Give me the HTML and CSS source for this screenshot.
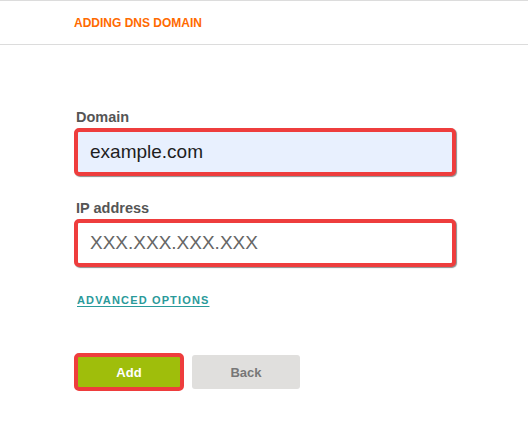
FILE: index.html
```html
<!DOCTYPE html>
<html>
<head>
<meta charset="utf-8">
<link rel="stylesheet" href="styles.css">
</head>
<body>
<div class="header">
  <h1 class="title">ADDING DNS DOMAIN</h1>
</div>
<form class="form">
  <label class="label" for="domain">Domain</label>
  <input class="field field-filled" id="domain" type="text" value="example.com">
  <label class="label label-second" for="ip">IP address</label>
  <input class="field" id="ip" type="text" placeholder="XXX.XXX.XXX.XXX">
  <a class="advanced" href="#">ADVANCED OPTIONS</a>
  <div class="actions">
    <button class="btn btn-add" type="button">Add</button>
    <button class="btn btn-back" type="button">Back</button>
  </div>
</form>
</body>
</html>
```
FILE: styles.css
```css
html, body {
  margin: 0;
  padding: 0;
  background: #ffffff;
  font-family: "Liberation Sans", Arial, sans-serif;
}
.header {
  height: 43px;
  border-top: 1px solid #dcdcdc;
  border-bottom: 1px solid #dcdcdc;
  padding-left: 74px;
  display: flex;
  align-items: flex-start;
}
.title {
  margin: 15px 0 0 0;
  font-size: 12px;
  line-height: 14px;
  font-weight: bold;
  color: #ff6a00;
}
.form {
  display: flex;
  flex-direction: column;
  align-items: flex-start;
  padding-left: 74px;
  margin: 0;
}
.label {
  font-size: 14.5px;
  line-height: 16px;
  font-weight: bold;
  color: #555555;
  margin: 64px 0 0 2px;
}
.label-second {
  margin-top: 24px;
}
.field {
  box-sizing: border-box;
  width: 382px;
  height: 48px;
  margin-top: 3px;
  border: 4px solid #ee3d3d;
  border-radius: 5px;
  box-shadow: 1px 1px 1px rgba(0, 0, 0, 0.45);
  padding: 0 0 0 12px;
  font-family: "Liberation Sans", Arial, sans-serif;
  font-size: 19px;
  color: #1e1e1e;
  background: #ffffff;
  outline: none;
}
.field-filled {
  background: #e8f0fe;
}
.field::placeholder {
  color: #666666;
  opacity: 1;
}
.advanced {
  margin: 26px 0 0 3px;
  font-size: 11px;
  line-height: 14px;
  font-weight: bold;
  letter-spacing: 1.15px;
  color: #2a9a9a;
  text-decoration: underline;
  text-underline-offset: 2px;
}
.actions {
  display: flex;
  align-items: center;
  gap: 8px;
  margin-top: 46px;
}
.btn {
  box-sizing: border-box;
  font-family: "Liberation Sans", Arial, sans-serif;
  font-size: 13px;
  font-weight: bold;
  border-radius: 4px;
  padding: 0;
  cursor: pointer;
}
.btn-add {
  width: 110px;
  height: 38px;
  background: #9fbe0b;
  color: #ffffff;
  border: 4px solid #ee3d3d;
  border-radius: 5px;
}
.btn-back {
  width: 108px;
  height: 34px;
  background: #e0dfdd;
  color: #777777;
  border: none;
  border-radius: 3px;
}
```
